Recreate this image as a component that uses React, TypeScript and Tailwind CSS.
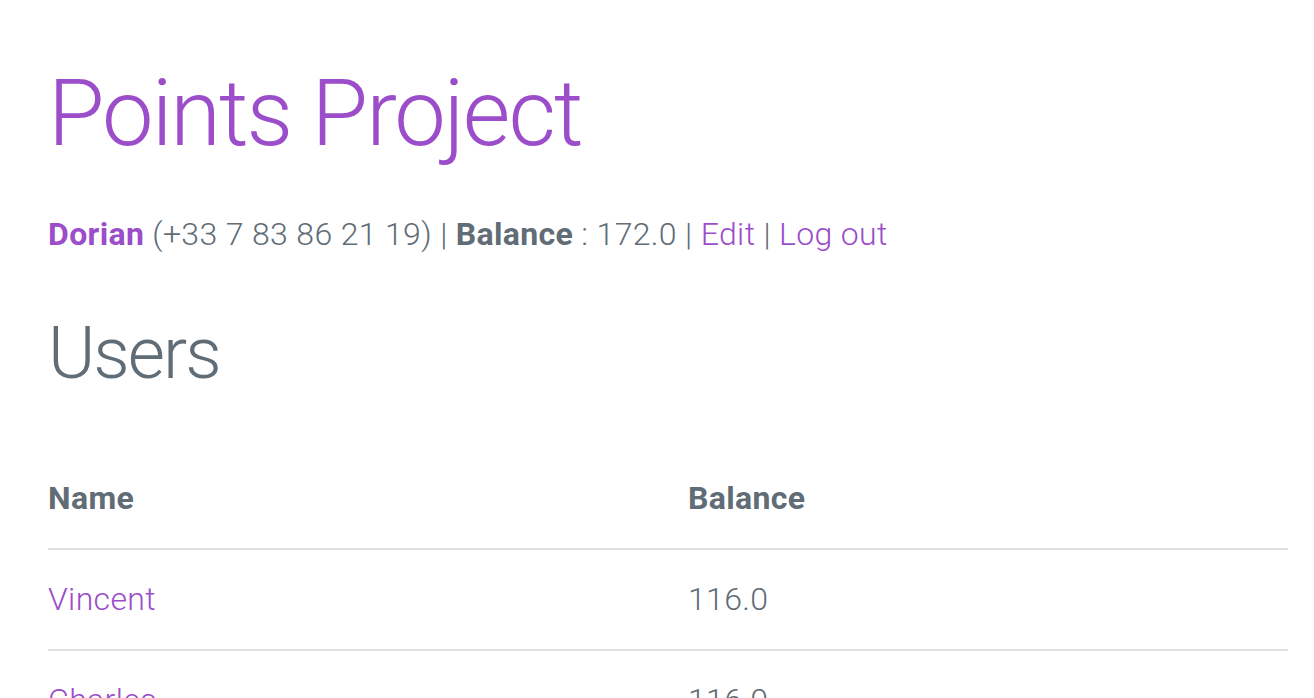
export default function App() {
  const users = [
    { name: "Vincent", balance: "116.0" },
    { name: "Charles", balance: "116.0" },
    { name: "Marie", balance: "98.0" },
  ];
  return (
    <div
      className="min-h-screen bg-white text-[#606c76] font-light text-[32px] leading-[1.6] tracking-[0.35px] pl-[48px] pt-[59px]"
      style={{ fontFamily: "Roboto, 'Helvetica Neue', Arial, sans-serif" }}
    >
      <h1 className="text-[92px] leading-[1.2] tracking-[-2px] font-light text-[#9b4dca] mb-[40px]">
        Points Project
      </h1>
      <p className="mb-[48px]">
        <a className="font-bold text-[#9b4dca]">Dorian</a> (+33 7 83 86 21 19) |{" "}
        <b className="font-bold">Balance</b> : 172.0 | <a className="text-[#9b4dca]">Edit</a> |{" "}
        <a className="text-[#9b4dca]">Log out</a>
      </p>
      <h2 className="text-[72px] leading-[1.25] tracking-[-2px] font-light mb-[50px]">Users</h2>
      <table className="w-[1240px] border-collapse text-left">
        <thead>
          <tr>
            <th className="w-[640px] py-[24px] pr-[30px] font-bold border-b-2 border-[#e1e1e1]">Name</th>
            <th className="py-[24px] px-[0px] font-bold border-b-2 border-[#e1e1e1]">Balance</th>
          </tr>
        </thead>
        <tbody>
          {users.map((u) => (
            <tr key={u.name}>
              <td className="py-[24px] pr-[30px] border-b-2 border-[#e1e1e1]">
                <a className="text-[#9b4dca]">{u.name}</a>
              </td>
              <td className="py-[24px] border-b-2 border-[#e1e1e1]">{u.balance}</td>
            </tr>
          ))}
        </tbody>
      </table>
    </div>
  );
}
